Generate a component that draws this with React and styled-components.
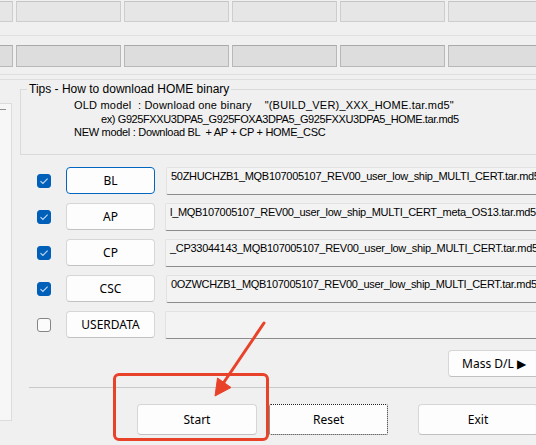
import React from "react";
import styled, { createGlobalStyle, css } from "styled-components";

const GlobalStyle = createGlobalStyle`
  html, body {
    margin: 0;
    padding: 0;
    background: #f0f0f0;
    overflow: hidden;
  }
  body {
    font-family: "Liberation Sans", Arial, sans-serif;
    font-size: 12px;
    color: #000;
  }
`;

const Window = styled.div`
  position: relative;
  width: 536px;
  height: 445px;
  overflow: hidden;
  background: #f0f0f0;
`;

const Strip = styled.div`
  display: flex;
  gap: 3px;
  margin-left: -92px;
  margin-top: ${(p) => p.$top}px;
`;

const Cell = styled.div`
  flex: 0 0 103px;
  height: ${(p) => (p.$dark ? 20 : 19)}px;
  background: ${(p) => (p.$dark ? "#dddddd" : "#e6e6e6")};
  border: 1px solid ${(p) => (p.$dark ? "#b8b8b8" : "#cdcdcd")};
  border-top-color: ${(p) => (p.$dark ? "#a9a9a9" : "#c4c4c4")};
`;

const Rule = styled.div`
  height: 1px;
  background: ${(p) => p.$color || "#dcdcdc"};
  margin-top: ${(p) => p.$top}px;
  margin-left: ${(p) => p.$left || 0}px;
`;

const Body = styled.div`
  display: flex;
  align-items: flex-start;
  margin-top: 2px;
`;

const SidePanel = styled.div`
  flex: 0 0 11px;
  height: 316px;
  margin-top: 21px;
  background: #f7f7f7;
  border: 1px solid #dcdcdc;
  border-left: none;

  &::before {
    content: "";
    display: block;
    margin-top: 5px;
    width: 6px;
    height: 1px;
    background: #8f8f8f;
  }
`;

const Content = styled.div`
  margin-left: 8px;
  width: 600px;
  display: flex;
  flex-direction: column;
`;

const Group = styled.fieldset`
  box-sizing: border-box;
  margin: 0;
  padding: 3px 0 0 0;
  height: 73px;
  border: 1px solid #dadada;
  border-radius: 0;
`;

const Legend = styled.legend`
  margin-left: 6px;
  padding: 0 2px;
  font-size: 12px;
  line-height: 14px;
`;

const TipLine = styled.div`
  white-space: pre;
  font-size: 11px;
  line-height: 13.5px;
  letter-spacing: ${(p) => p.$ls}px;
  padding-left: ${(p) => p.$indent}px;
`;

const Rows = styled.div`
  display: flex;
  flex-direction: column;
  gap: 9px;
  margin-top: 12px;
`;

const Row = styled.div`
  display: flex;
  align-items: center;
  height: 27px;
`;

const Check = styled.span`
  box-sizing: border-box;
  width: 14px;
  height: 14px;
  margin-left: 17px;
  border-radius: 3px;
  display: flex;
  align-items: center;
  justify-content: center;
  ${(p) =>
    p.$on
      ? css`
          background: #005fb8;
          border: 1px solid #005fb8;
        `
      : css`
          background: #fbfbfb;
          border: 1px solid #858585;
        `}
`;

const PartButton = styled.div`
  box-sizing: border-box;
  width: 89px;
  height: 27px;
  margin-left: 15px;
  display: flex;
  align-items: center;
  justify-content: center;
  background: #fdfdfd;
  border: 1px solid ${(p) => (p.$focus ? "#0067c0" : "#d6d6d6")};
  border-bottom-color: ${(p) => (p.$focus ? "#0067c0" : "#c2c2c2")};
  border-radius: 4px;
  font-family: "Noto Sans", "Liberation Sans", sans-serif;
  font-size: 12px;
`;

const PathField = styled.div`
  box-sizing: border-box;
  flex: 1;
  height: 28px;
  margin-left: ${(p) => (p.$shift ? 10 : 11)}px;
  padding: 2px 0 0 4px;
  background: #f3f3f3;
  border: 1px solid #e2e2e2;
  border-bottom: 1px solid #8c8c8c;
  border-radius: 2px;
  white-space: nowrap;
  overflow: hidden;
  font-size: 11px;
  letter-spacing: -0.3px;
`;

const MassRow = styled.div`
  display: flex;
  margin-top: 12px;
  padding-left: 428px;
`;

const Button = styled.div`
  box-sizing: border-box;
  width: ${(p) => p.$w}px;
  height: ${(p) => p.$h || 31}px;
  margin-left: ${(p) => p.$gap || 0}px;
  display: flex;
  align-items: center;
  justify-content: center;
  background: #fdfdfd;
  border: 1px solid #d6d6d6;
  border-bottom-color: #c0c0c0;
  border-radius: 4px;
  font-family: "Noto Sans", "Liberation Sans", sans-serif;
  font-size: 12px;
  ${(p) =>
    p.$dotted &&
    css`
      border: 1px dotted #222;
      border-radius: 2px;
    `}
`;

const Actions = styled.div`
  display: flex;
  margin-top: 16px;
  padding-left: 117px;
`;

const Highlight = styled.div`
  position: absolute;
  left: 113px;
  top: 373px;
  width: 150px;
  height: 62px;
  border: 3px solid #e8432a;
  border-radius: 6px;
`;

const Arrow = styled.svg`
  position: absolute;
  left: 0;
  top: 0;
  pointer-events: none;
`;

const CheckMark = () => (
  <svg width="10" height="8" viewBox="0 0 10 8">
    <path d="M1.5 4.2 L3.9 6.4 L8.6 1.6" fill="none" stroke="#c4dcf5" strokeWidth="1.1" />
  </svg>
);

const parts = [
  { name: "BL", on: true, focus: true, file: "50ZHUCHZB1_MQB107005107_REV00_user_low_ship_MULTI_CERT.tar.md5" },
  { name: "AP", on: true, shift: true, file: "l_MQB107005107_REV00_user_low_ship_MULTI_CERT_meta_OS13.tar.md5" },
  { name: "CP", on: true, shift: true, file: "_CP33044143_MQB107005107_REV00_user_low_ship_MULTI_CERT.tar.md5" },
  { name: "CSC", on: true, file: "0OZWCHZB1_MQB107005107_REV00_user_low_ship_MULTI_CERT.tar.md5" },
  { name: "USERDATA", on: false, shift: true, file: "" },
];

export default function App() {
  return (
    <Window>
      <GlobalStyle />
      <Strip $top={1}>
        {[0, 1, 2, 3, 4, 5].map((i) => (
          <Cell key={i} />
        ))}
      </Strip>
      <Rule $top={13} $color="#e0e0e0" />
      <Strip $top={9}>
        {[0, 1, 2, 3, 4, 5].map((i) => (
          <Cell key={i} $dark />
        ))}
      </Strip>
      <Rule $top={7} $color="#dedede" />
      <Rule $top={4} $color="#dedede" />
      <Body>
        <SidePanel />
        <Content>
          <Group>
            <Legend>Tips - How to download HOME binary</Legend>
            <TipLine $indent={53} $ls={0.2}>{'OLD model  : Download one binary    "(BUILD_VER)_XXX_HOME.tar.md5"'}</TipLine>
            <TipLine $indent={80} $ls={-0.4}>ex) G925FXXU3DPA5_G925FOXA3DPA5_G925FXXU3DPA5_HOME.tar.md5</TipLine>
            <TipLine $indent={53} $ls={-0.3}>NEW model : Download BL  + AP + CP + HOME_CSC</TipLine>
          </Group>
          <Rows>
            {parts.map((p) => (
              <Row key={p.name}>
                <Check $on={p.on}>{p.on && <CheckMark />}</Check>
                <PartButton $focus={p.focus}>{p.name}</PartButton>
                <PathField $shift={p.shift}>{p.file}</PathField>
              </Row>
            ))}
          </Rows>
          <MassRow>
            <Button $w={92} $h={27}>Mass D/L ▶</Button>
          </MassRow>
          <Rule $top={10} $left={9} $color="#c8c8c8" />
          <Actions>
            <Button $w={120}>Start</Button>
            <Button $w={119} $gap={12} $dotted>Reset</Button>
            <Button $w={120} $gap={30}>Exit</Button>
          </Actions>
        </Content>
      </Body>
      <Highlight />
      <Arrow width="536" height="445" viewBox="0 0 536 445">
        <line x1="264" y1="323" x2="220" y2="388" stroke="#e8432a" strokeWidth="3" strokeLinecap="round" />
        <path d="M215 396 L217.5 378 L231 387.5 Z" fill="#e8432a" stroke="#e8432a" strokeWidth="1" strokeLinejoin="round" />
      </Arrow>
    </Window>
  );
}
